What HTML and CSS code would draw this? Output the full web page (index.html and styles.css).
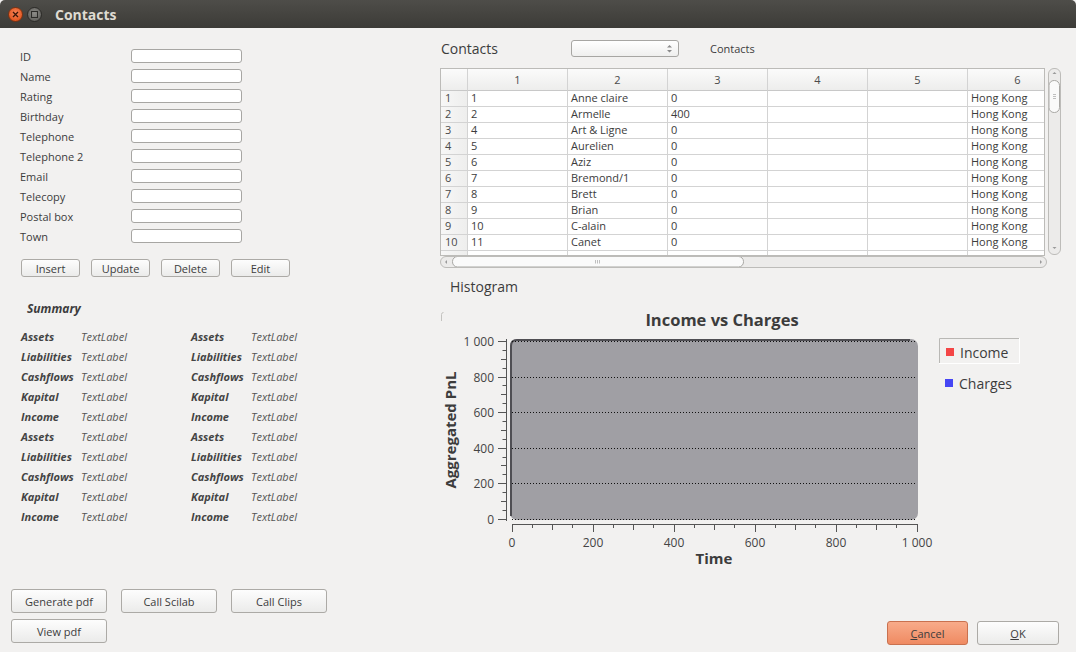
FILE: index.html
```html
<!DOCTYPE html>
<html>
<head>
<meta charset="utf-8">
<title>Contacts</title>
<link rel="stylesheet" href="styles.css">
</head>
<body>
<div class="window">
  <header class="titlebar">
    <span class="wbtn close"><svg width="7" height="7" viewBox="0 0 7 7"><path d="M1 1L6 6M6 1L1 6" stroke="#3a1608" stroke-width="1.3"/></svg></span>
    <span class="wbtn max"><svg width="7" height="7" viewBox="0 0 7 7"><rect x="0.5" y="0.5" width="6" height="6" fill="none" stroke="#2c2b28" stroke-width="1"/></svg></span>
    <span class="title">Contacts</span>
  </header>
  <main class="content">
    <section class="left">
      <div class="form">
        <span class="flabel">ID</span><span class="field"></span>
        <span class="flabel">Name</span><span class="field"></span>
        <span class="flabel">Rating</span><span class="field"></span>
        <span class="flabel">Birthday</span><span class="field"></span>
        <span class="flabel">Telephone</span><span class="field"></span>
        <span class="flabel">Telephone 2</span><span class="field"></span>
        <span class="flabel">Email</span><span class="field"></span>
        <span class="flabel">Telecopy</span><span class="field"></span>
        <span class="flabel">Postal box</span><span class="field"></span>
        <span class="flabel">Town</span><span class="field"></span>
      </div>
      <div class="crud">
        <span class="btn">Insert</span>
        <span class="btn">Update</span>
        <span class="btn">Delete</span>
        <span class="btn">Edit</span>
      </div>
      <div class="summary-title">Summary</div>
      <div class="summary">
        <span class="sl">Assets</span><span class="sv">TextLabel</span><span class="sl">Assets</span><span class="sv">TextLabel</span>
        <span class="sl">Liabilities</span><span class="sv">TextLabel</span><span class="sl">Liabilities</span><span class="sv">TextLabel</span>
        <span class="sl">Cashflows</span><span class="sv">TextLabel</span><span class="sl">Cashflows</span><span class="sv">TextLabel</span>
        <span class="sl">Kapital</span><span class="sv">TextLabel</span><span class="sl">Kapital</span><span class="sv">TextLabel</span>
        <span class="sl">Income</span><span class="sv">TextLabel</span><span class="sl">Income</span><span class="sv">TextLabel</span>
        <span class="sl">Assets</span><span class="sv">TextLabel</span><span class="sl">Assets</span><span class="sv">TextLabel</span>
        <span class="sl">Liabilities</span><span class="sv">TextLabel</span><span class="sl">Liabilities</span><span class="sv">TextLabel</span>
        <span class="sl">Cashflows</span><span class="sv">TextLabel</span><span class="sl">Cashflows</span><span class="sv">TextLabel</span>
        <span class="sl">Kapital</span><span class="sv">TextLabel</span><span class="sl">Kapital</span><span class="sv">TextLabel</span>
        <span class="sl">Income</span><span class="sv">TextLabel</span><span class="sl">Income</span><span class="sv">TextLabel</span>
      </div>
      <div class="actions">
        <span class="btn big">Generate pdf</span>
        <span class="btn big">Call Scilab</span>
        <span class="btn big">Call Clips</span>
        <span class="btn big">View pdf</span>
      </div>
    </section>
    <section class="right">
      <div class="toolbar">
        <span class="big-label">Contacts</span>
        <span class="combo"><svg width="7" height="11" viewBox="0 0 7 11"><path d="M1 4.5L3.5 2L6 4.5Z M1 7L3.5 9.5L6 7Z" fill="#8a8a8a"/></svg></span>
        <span class="small-label">Contacts</span>
      </div>
      <div class="tablewrap">
        <div class="frame">
          <div class="grid">
            <span class="th corner"></span><span class="th">1</span><span class="th">2</span><span class="th">3</span><span class="th">4</span><span class="th">5</span><span class="th">6</span>
            <span class="rh">1</span><span class="td">1</span><span class="td">Anne claire</span><span class="td">0</span><span class="td"></span><span class="td"></span><span class="td">Hong Kong</span>
            <span class="rh">2</span><span class="td">2</span><span class="td">Armelle</span><span class="td">400</span><span class="td"></span><span class="td"></span><span class="td">Hong Kong</span>
            <span class="rh">3</span><span class="td">4</span><span class="td">Art &amp; Ligne</span><span class="td">0</span><span class="td"></span><span class="td"></span><span class="td">Hong Kong</span>
            <span class="rh">4</span><span class="td">5</span><span class="td">Aurelien</span><span class="td">0</span><span class="td"></span><span class="td"></span><span class="td">Hong Kong</span>
            <span class="rh">5</span><span class="td">6</span><span class="td">Aziz</span><span class="td">0</span><span class="td"></span><span class="td"></span><span class="td">Hong Kong</span>
            <span class="rh">6</span><span class="td">7</span><span class="td">Bremond/1</span><span class="td">0</span><span class="td"></span><span class="td"></span><span class="td">Hong Kong</span>
            <span class="rh">7</span><span class="td">8</span><span class="td">Brett</span><span class="td">0</span><span class="td"></span><span class="td"></span><span class="td">Hong Kong</span>
            <span class="rh">8</span><span class="td">9</span><span class="td">Brian</span><span class="td">0</span><span class="td"></span><span class="td"></span><span class="td">Hong Kong</span>
            <span class="rh">9</span><span class="td">10</span><span class="td">C-alain</span><span class="td">0</span><span class="td"></span><span class="td"></span><span class="td">Hong Kong</span>
            <span class="rh">10</span><span class="td">11</span><span class="td">Canet</span><span class="td">0</span><span class="td"></span><span class="td"></span><span class="td">Hong Kong</span>
            <span class="rh"></span><span class="td"></span><span class="td"></span><span class="td"></span><span class="td"></span><span class="td"></span><span class="td"></span>
          </div>
        </div>
        <div class="vscroll">
          <svg width="13" height="186" viewBox="0 0 13 186">
            <path d="M4.5 6L6.5 4L8.5 6Z" fill="#9a9a9a"/>
            <rect x="1" y="12.5" width="10.5" height="32" rx="5" fill="#fafafa" stroke="#a9a8a5"/>
            <path d="M5 26.5H8M5 28.5H8M5 30.5H8" stroke="#b0b0b0" stroke-width="0.8"/>
            <path d="M4.5 179L6.5 181L8.5 179Z" fill="#9a9a9a"/>
          </svg>
        </div>
      </div>
      <div class="hscroll">
        <svg width="607" height="12" viewBox="0 0 607 12">
          <path d="M7 4L5 6L7 8Z" fill="#9a9a9a"/>
          <rect x="12.5" y="0.5" width="291" height="10.5" rx="5" fill="#fafafa" stroke="#a9a8a5"/>
          <path d="M155.5 4V7.5M157.5 4V7.5M159.5 4V7.5" stroke="#b0b0b0" stroke-width="0.8"/>
          <path d="M600 4L602 6L600 8Z" fill="#9a9a9a"/>
        </svg>
      </div>
      <div class="hist-label">Histogram</div>
      <svg class="chart" width="620" height="275" viewBox="0 0 620 275">
        <path d="M3.5 12.5Q1.5 12.5 1.5 14.5V21" fill="none" stroke="#c4c3c0"/>
        <text x="282" y="26" class="ctitle" text-anchor="middle">Income vs Charges</text>
        <rect x="70" y="39" width="408" height="181" rx="7" fill="#a09fa4"/>
        <path d="M71 216V46Q71 40 77 40H470" fill="none" stroke="#4f4e53" stroke-width="2"/>
        <path d="M72 41.5H476M72 77.5H476M72 112.5H476M72 148.5H476M72 183.5H476M72 219.5H476" stroke="#111" stroke-width="1" stroke-dasharray="1 2"/>
        <path d="M66.5 39V221" stroke="#555" stroke-width="1"/>
        <path d="M58 41.5H66.5M58 77.5H66.5M58 112.5H66.5M58 148.5H66.5M58 183.5H66.5M58 219.5H66.5" stroke="#555"/>
        <path d="M61 59.5H66.5M61 94.5H66.5M61 130.5H66.5M61 165.5H66.5M61 201.5H66.5" stroke="#555"/>
        <path d="M62.5 50.5H66.5M62.5 68.5H66.5M62.5 85.5H66.5M62.5 103.5H66.5M62.5 121.5H66.5M62.5 139.5H66.5M62.5 157.5H66.5M62.5 174.5H66.5M62.5 192.5H66.5M62.5 210.5H66.5" stroke="#555"/>
        <g class="ylab" text-anchor="end">
          <text x="54" y="45.5">1 000</text>
          <text x="54" y="81.5">800</text>
          <text x="54" y="116.5">600</text>
          <text x="54" y="152.5">400</text>
          <text x="54" y="187.5">200</text>
          <text x="54" y="223.5">0</text>
        </g>
        <path d="M72 224.5H478" stroke="#555"/>
        <path d="M72.5 224V232M153.5 224V232M234.5 224V232M315.5 224V232M396.5 224V232M477.5 224V232" stroke="#555"/>
        <path d="M112.5 224V230M193.5 224V230M274.5 224V230M355.5 224V230M436.5 224V230" stroke="#555"/>
        <path d="M92.5 224V228M132.5 224V228M173.5 224V228M213.5 224V228M254.5 224V228M294.5 224V228M335.5 224V228M375.5 224V228M416.5 224V228M456.5 224V228" stroke="#555"/>
        <g class="ylab" text-anchor="middle">
          <text x="72" y="247">0</text>
          <text x="153" y="247">200</text>
          <text x="234" y="247">400</text>
          <text x="315" y="247">600</text>
          <text x="396" y="247">800</text>
          <text x="477" y="247">1 000</text>
        </g>
        <text x="274" y="264" class="axtitle" text-anchor="middle">Time</text>
        <text transform="translate(15.5 130) rotate(-90)" class="axtitle" text-anchor="middle">Aggregated PnL</text>
        <path d="M499.5 63V38.5H579" fill="none" stroke="#b9b8b5"/>
        <path d="M579.5 38V63.5H499" fill="none" stroke="#ffffff"/>
        <rect x="506" y="48" width="8" height="8" fill="#f44646"/>
        <text x="520" y="58" class="leg">Income</text>
        <rect x="505" y="79" width="8" height="8" fill="#4646f4"/>
        <text x="519" y="89" class="leg">Charges</text>
      </svg>
      <div class="dialog">
        <span class="btn dbtn cancel"><u>C</u>ancel</span>
        <span class="btn dbtn ok"><u>O</u>K</span>
      </div>
    </section>
  </main>
</div>
</body>
</html>
```

FILE: styles.css
```css
* { box-sizing: border-box; }
html, body { margin: 0; padding: 0; }
body {
  width: 1076px;
  height: 652px;
  overflow: hidden;
  background: #f2f1f0;
  font-family: "Open Sans", "DejaVu Sans", sans-serif;
  font-size: 11px;
  color: #3c3c3c;
}
.window { display: flex; flex-direction: column; height: 652px; }

.titlebar {
  height: 28px;
  flex: none;
  display: flex;
  align-items: center;
  padding-left: 8px;
  background: linear-gradient(#4e4d49, #3c3b37);
  border-radius: 5px 5px 0 0;
}
.wbtn {
  width: 15px;
  height: 15px;
  border-radius: 50%;
  display: flex;
  align-items: center;
  justify-content: center;
}
.close {
  background: radial-gradient(circle at 50% 40%, #f7855a, #e2561f 75%);
  border: 1px solid #7d3212;
}
.max {
  margin-left: 4px;
  background: radial-gradient(circle at 50% 40%, #8d8c88, #62615d 75%);
  border: 1px solid #2c2b28;
}
.title {
  margin-left: 13px;
  color: #dfdbd2;
  font-weight: bold;
  font-size: 14px;
}

.content { flex: 1; display: flex; min-height: 0; }

.left {
  width: 440px;
  flex: none;
  padding-left: 11px;
  display: flex;
  flex-direction: column;
}
.form {
  margin: 18px 0 0 9px;
  display: grid;
  grid-template-columns: 111px 111px;
  grid-auto-rows: 20px;
  align-items: center;
}
.field {
  display: block;
  height: 14px;
  width: 111px;
  border: 1px solid #a7a6a3;
  border-radius: 3px;
  background: #fff;
}
.crud { margin: 13px 0 0 10px; display: flex; gap: 11px; }
.btn {
  display: flex;
  align-items: center;
  justify-content: center;
  width: 59px;
  height: 18px;
  border: 1px solid #acaaa6;
  border-radius: 3px;
  background: linear-gradient(#fdfdfd, #ebebea);
  color: #3c3c3c;
}
.summary-title {
  margin: 24px 0 0 16px;
  font-weight: bold;
  font-style: italic;
  font-size: 12px;
  line-height: 16px;
}
.summary {
  margin: 9px 0 0 10px;
  display: grid;
  grid-template-columns: 60px 110px 60px 80px;
  grid-auto-rows: 20px;
  align-items: center;
}
.sl { font-weight: bold; font-style: italic; color: #444; }
.sv { font-style: italic; color: #555; }
.actions {
  margin-top: auto;
  margin-bottom: 9px;
  display: grid;
  grid-template-columns: repeat(3, 96px);
  gap: 6px 14px;
}
.btn.big { width: 96px; height: 24px; }

.right { flex: 1; display: flex; flex-direction: column; }
.toolbar { margin-top: 10px; height: 20px; display: flex; align-items: center; }
.big-label { width: 131px; padding-left: 1px; font-size: 14px; }
.combo {
  width: 108px;
  height: 17px;
  border: 1px solid #a7a6a3;
  border-radius: 3px;
  background: linear-gradient(#ffffff, #efefee);
  display: flex;
  align-items: center;
  justify-content: flex-end;
  padding-right: 5px;
}
.small-label { margin-left: 31px; font-size: 11px; }

.tablewrap { margin-top: 10px; display: flex; }
.frame {
  width: 605px;
  height: 188px;
  border: 1px solid #bcbbb8;
  background: #fff;
  overflow: hidden;
}
.grid {
  display: grid;
  grid-template-columns: 27px repeat(6, 100px);
  grid-template-rows: 22px;
  grid-auto-rows: 16px;
  width: 627px;
}
.grid > span {
  border-right: 1px solid #d3d3d3;
  border-bottom: 1px solid #d3d3d3;
  white-space: nowrap;
  overflow: hidden;
  line-height: 13px;
}
.th {
  background: linear-gradient(#fbfbfb, #ededec);
  text-align: center;
  line-height: 21px !important;
  color: #4a4a4a;
  border-bottom-color: #c8c8c8 !important;
}
.rh {
  background: linear-gradient(90deg, #f7f7f7, #eeeeed);
  padding-left: 4px;
  color: #4a4a4a;
}
.td { padding-left: 3px; }
.vscroll {
  margin-left: 3px;
  width: 13px;
  height: 187px;
  border: 1px solid #bdbcb9;
  border-radius: 6px;
  background: #ecebea;
  overflow: hidden;
}
.vscroll svg { display: block; margin: -1px 0 0 -1px; }
.hscroll {
  width: 607px;
  height: 12px;
  border: 1px solid #bdbcb9;
  border-radius: 6px;
  background: #ecebea;
  overflow: hidden;
}
.hscroll svg { display: block; margin: -1px 0 0 -1px; }
.hist-label {
  margin: 11px 0 0 10px;
  font-size: 14px;
  line-height: 16px;
}
.chart { display: block; margin-top: 5px; }
.ctitle { font-weight: bold; font-size: 16.5px; fill: #3c3c3c; }
.ylab text { font-size: 12px; fill: #444; }
.axtitle { font-weight: bold; font-size: 15px; fill: #3c3c3c; }
.leg { font-size: 14px; fill: #3c3c3c; }

.dialog {
  margin-top: auto;
  margin-bottom: 7px;
  margin-right: 17px;
  display: flex;
  justify-content: flex-end;
  gap: 9px;
}
.dbtn { height: 24px; }
.cancel {
  width: 81px;
  background: linear-gradient(#f8ab8a, #ef8a62);
  border-color: #c9714f;
}
.ok { width: 82px; }
```
